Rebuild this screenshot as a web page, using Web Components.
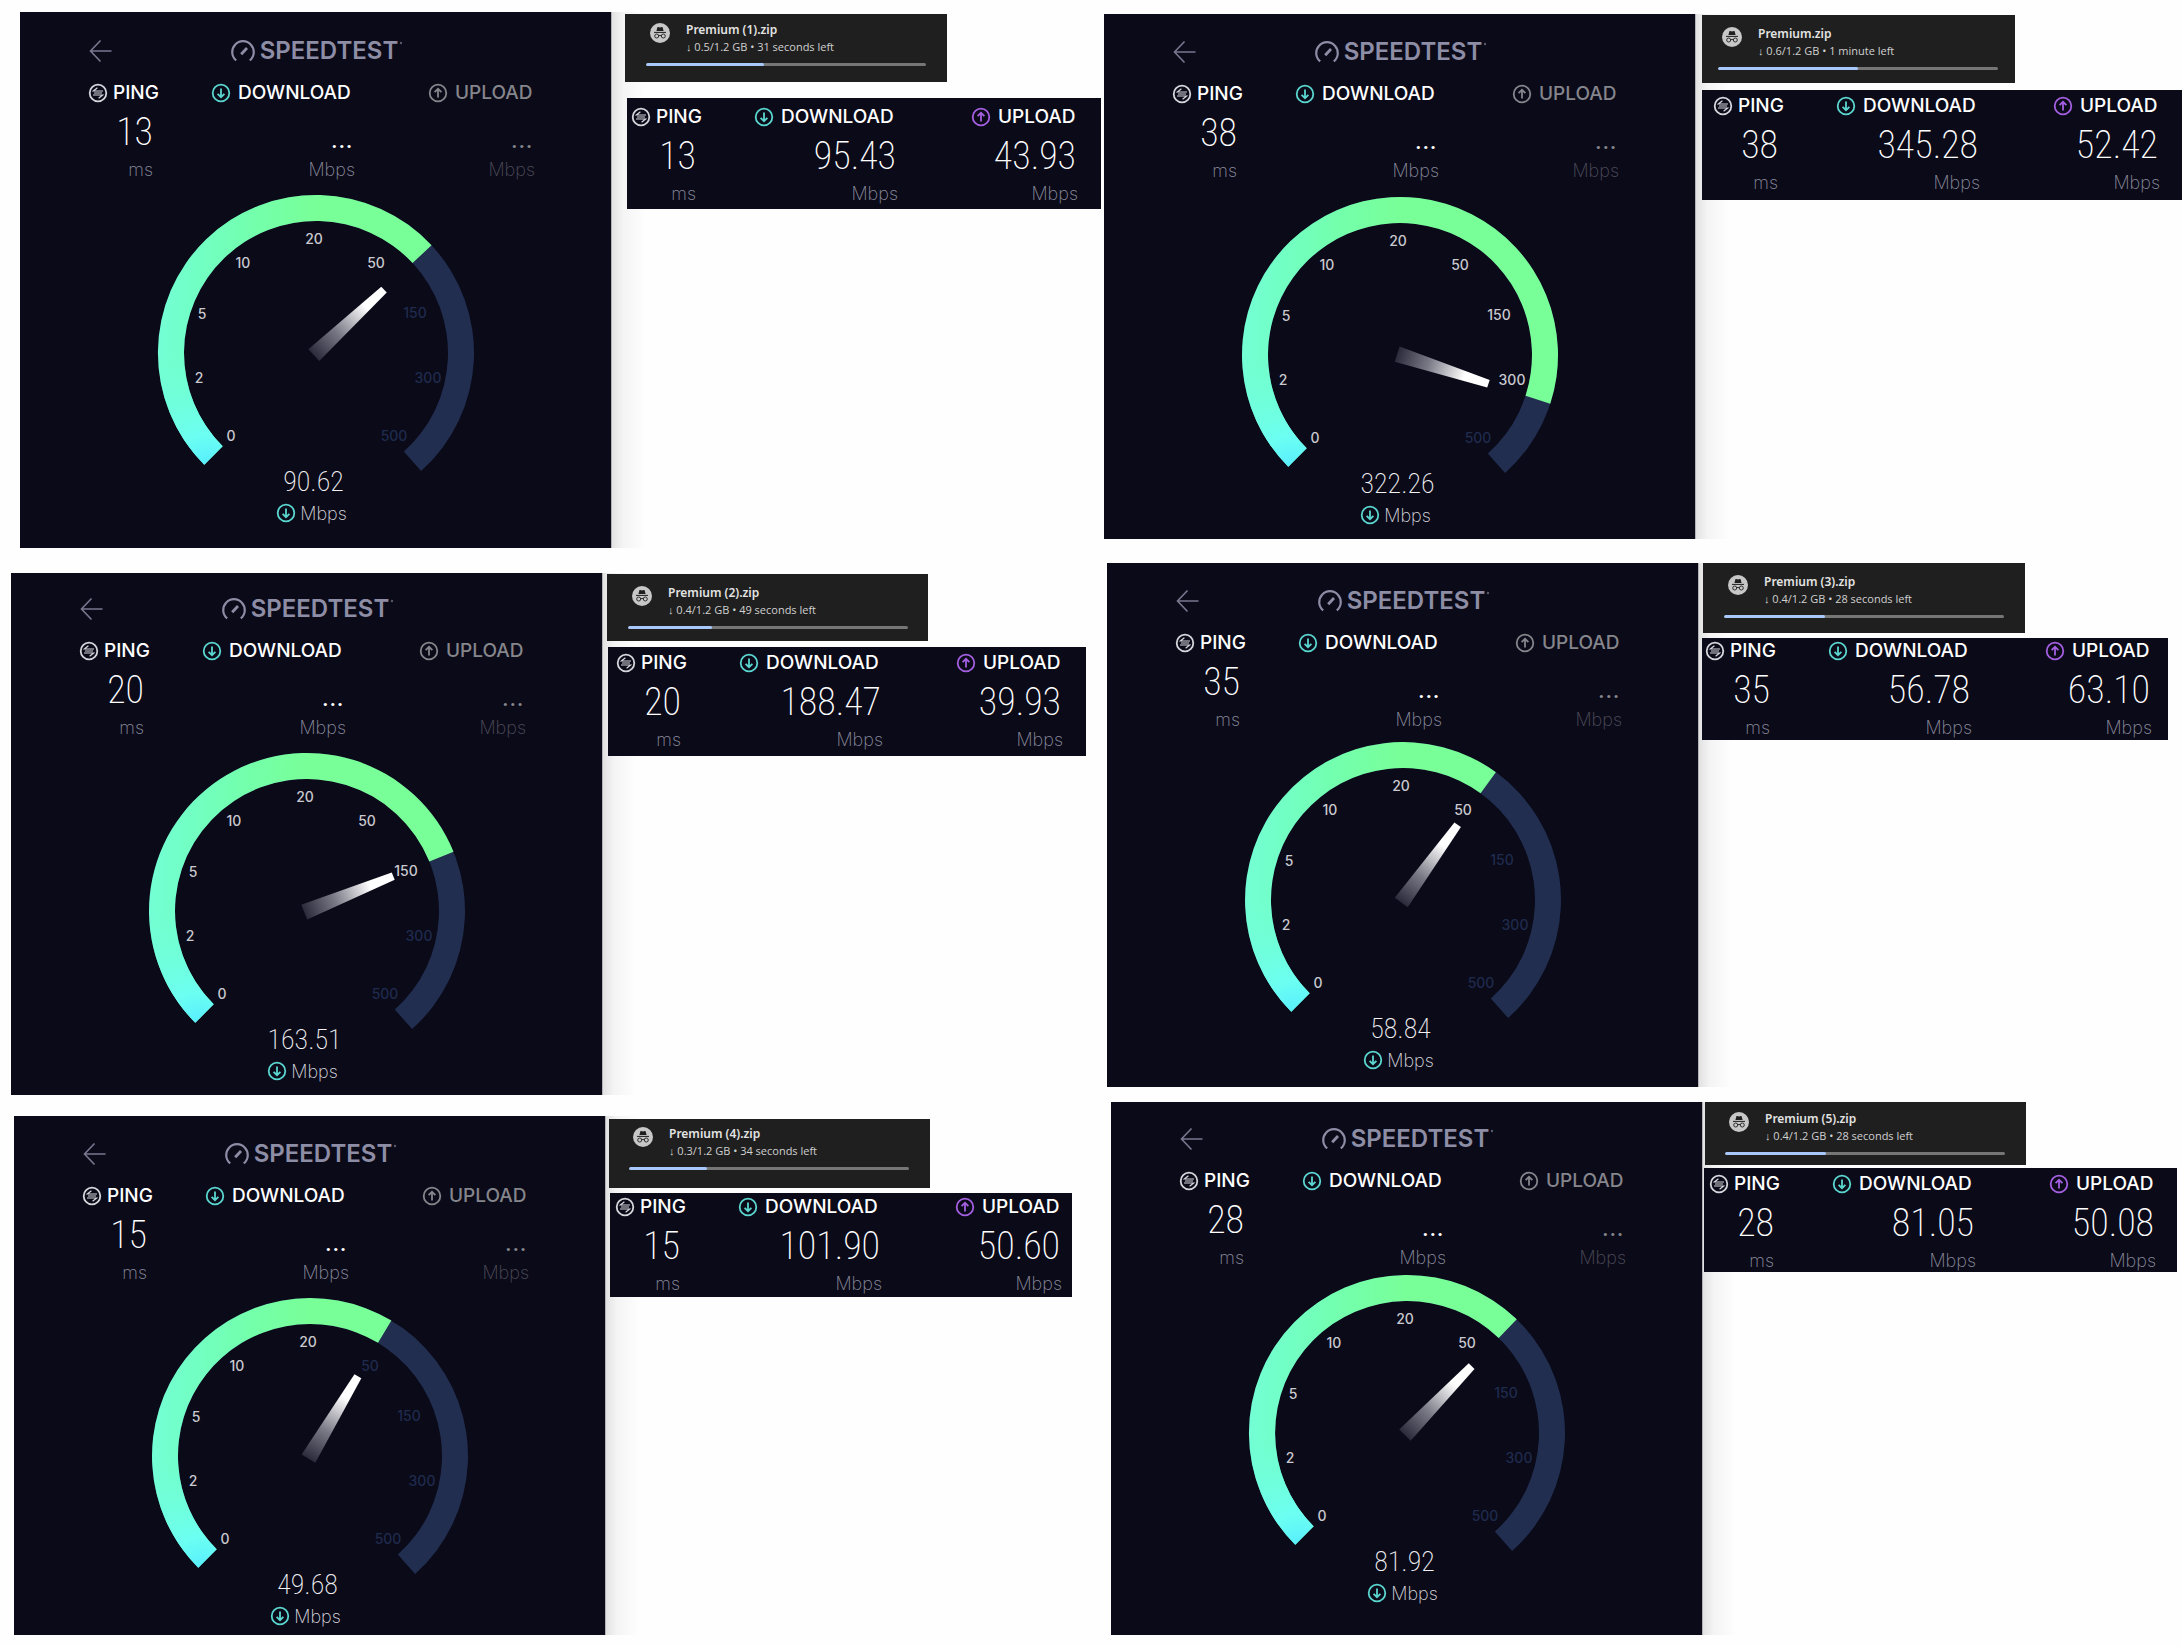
<!DOCTYPE html>
<html lang="en">
<head>
<meta charset="utf-8">
<title>Speedtest runs</title>
<style>
  body {
    margin: 0;
    background: #fefefe;
    font-family: Inter, "Liberation Sans", sans-serif;
  }
</style>
</head>
<body>

<run-board>
  <speed-run slot="left" style="--left:20px; --top:12px">
    <speed-panel slot="panel" ping="13" speed="90.62" angle="47" style="--pad-top:26px; --gauge-gap:14px; --pad-bottom:23px"></speed-panel>
    <download-toast slot="side" name="Premium (1).zip" status="0.5/1.2 GB • 31 seconds left" percent="42" style="--x:14px; --y:2px; --w:322px; --pad:7px 21px 16px"></download-toast>
    <result-strip slot="side" ping="13" download="95.43" upload="43.93" style="--x:16px; --y:16px; --w:474px; --pad:9px 4px 4px 5px"></result-strip>
  </speed-run>
  <speed-run slot="left" style="--left:11px; --top:25px">
    <speed-panel slot="panel" ping="20" speed="163.51" angle="68" style="--pad-top:23px; --gauge-gap:14px; --pad-bottom:12px"></speed-panel>
    <download-toast slot="side" name="Premium (2).zip" status="0.4/1.2 GB • 49 seconds left" percent="30" style="--x:5px; --y:1px; --w:321px; --pad:10px 21px 12px"></download-toast>
    <result-strip slot="side" ping="20" download="188.47" upload="39.93" style="--x:6px; --y:6px; --w:478px; --pad:6px 4px 5px 9px"></result-strip>
  </speed-run>
  <speed-run slot="left" style="--left:14px; --top:21px">
    <speed-panel slot="panel" ping="15" speed="49.68" angle="31" style="--pad-top:25px; --gauge-gap:14px; --pad-bottom:7px"></speed-panel>
    <download-toast slot="side" name="Premium (4).zip" status="0.3/1.2 GB • 34 seconds left" percent="28" style="--x:4px; --y:3px; --w:321px; --pad:6px 20px 18px"></download-toast>
    <result-strip slot="side" ping="15" download="101.90" upload="50.60" style="--x:5px; --y:5px; --w:462px; --pad:4px 4px 2px 6px"></result-strip>
  </speed-run>

  <speed-run slot="right" style="--left:1px; --top:14px">
    <speed-panel slot="panel" ping="38" speed="322.26" angle="108" style="--pad-top:25px; --gauge-gap:15px; --pad-bottom:12px"></speed-panel>
    <download-toast slot="side" name="Premium.zip" status="0.6/1.2 GB • 1 minute left" percent="50" style="--x:7px; --y:1px; --w:313px; --pad:10px 16px 13px"></download-toast>
    <result-strip slot="side" ping="38" download="345.28" upload="52.42" style="--x:7px; --y:7px; --w:480px; --pad:6px 4px 6px 12px"></result-strip>
  </speed-run>
  <speed-run slot="right" style="--left:4px; --top:24px">
    <speed-panel slot="panel" ping="35" speed="58.84" angle="36" style="--pad-top:25px; --gauge-gap:11px; --pad-bottom:15px"></speed-panel>
    <download-toast slot="side" name="Premium (3).zip" status="0.4/1.2 GB • 28 seconds left" percent="36" style="--x:5px; --y:0px; --w:322px; --pad:10px 21px 15px"></download-toast>
    <result-strip slot="side" ping="35" download="56.78" upload="63.10" style="--x:4px; --y:5px; --w:466px; --pad:3px 4px 1px 4px"></result-strip>
  </speed-run>
  <speed-run slot="right" style="--left:8px; --top:15px">
    <speed-panel slot="panel" ping="28" speed="81.92" angle="44" style="--pad-top:24px; --gauge-gap:6px; --pad-bottom:30px"></speed-panel>
    <download-toast slot="side" name="Premium (5).zip" status="0.4/1.2 GB • 28 seconds left" percent="36" style="--x:3px; --y:0px; --w:321px; --pad:8px 20px 10px"></download-toast>
    <result-strip slot="side" ping="28" download="81.05" upload="50.08" style="--x:2px; --y:3px; --w:473px; --pad:6px 4px 0 6px"></result-strip>
  </speed-run>
</run-board>

<script>
  class RunBoard extends HTMLElement {
    constructor() {
      super();
      this.attachShadow({ mode: 'open' });
      this.shadowRoot.innerHTML = `
        <style>
          :host { display: grid; grid-template-columns: 1103fr 1079fr; align-items: start; }
          div { display: flex; flex-direction: column; min-width: 0; }
        </style>
        <div><slot name="left"></slot></div>
        <div><slot name="right"></slot></div>
      `;
    }
  }

  // one test: the panel on the left, its toast and result strip beside it
  class SpeedRun extends HTMLElement {
    constructor() {
      super();
      this.attachShadow({ mode: 'open' });
      this.shadowRoot.innerHTML = `
        <style>
          :host { display: flex; margin: var(--top) 0 0 var(--left); }
          .panel { flex: 0 1 591px; min-width: 0; }
          .side {
            flex: 1;
            min-width: 0;
            display: flex;
            flex-direction: column;
            align-items: flex-start;
            background: linear-gradient(to right, #b4b4b8 0 1px, #e2e2e2 1px, #f4f4f4 12px, #fefefe 34px);
          }
        </style>
        <div class="panel"><slot name="panel"></slot></div>
        <div class="side"><slot name="side"></slot></div>
      `;
    }
  }

  const icons = {
    ping: `
      <circle cx="10" cy="10" r="8.3"/>
      <path d="M15 8H5.4L9.4 4.8M6 10H14M5 12H14.6L10.6 15.2" stroke-width="1.2"/>`,
    down: `
      <circle cx="10" cy="10" r="8.3"/>
      <path d="M10 5.4V14M6.6 10.8L10 14.2L13.4 10.8"/>`,
    up: `
      <circle cx="10" cy="10" r="8.3"/>
      <path d="M10 14.6V6M6.6 9.2L10 5.8L13.4 9.2"/>`
  };

  class RoundIcon extends HTMLElement {
    constructor() {
      super();
      this.attachShadow({ mode: 'open' });
    }

    connectedCallback() {
      this.shadowRoot.innerHTML = `
        <style>
          :host { display: block; flex: none; width: 20px; height: 20px; }
          svg { display: block; fill: none; stroke: currentColor; stroke-width: 1.8; }
        </style>
        <svg viewBox="0 0 20 20" width="20" height="20">${icons[this.getAttribute('name')]}</svg>
      `;
    }
  }

  class SpeedStats extends HTMLElement {
    constructor() {
      super();
      this.attachShadow({ mode: 'open' });
    }

    connectedCallback() {
      const ping = this.getAttribute('ping');
      const download = this.getAttribute('download') || '...';
      const upload = this.getAttribute('upload') || '...';
      const waiting = !this.hasAttribute('upload');
      this.shadowRoot.innerHTML = `
        <style>
          :host { display: grid; grid-template-columns: 123px 217px 107px; color: #fff; }
          dl { margin: 0; }
          dt { display: flex; align-items: center; gap: 5px; height: 20px; font-size: 19px; font-weight: 500; line-height: 20px; margin-left: -1px; }
          dd { margin: 0; text-align: right; }
          .ping { width: 64px; }
          .down { width: 143px; }
          .up { width: 106px; }
          .value { height: 56px; line-height: 58px; padding-right: 2px; font-family: "Roboto Condensed", Roboto, sans-serif; font-weight: 200; font-size: 38px; }
          .ping .value { padding-right: 0; }
          .dots { line-height: 72px; font-weight: 400; font-size: 28px; }
          .unit { height: 22px; line-height: 22px; font-size: 18px; font-weight: 200; color: #8a8a9c; }
          .ping round-icon { color: #d6d6dc; }
          .down round-icon { color: #5ad6cf; }
          .up round-icon { color: #a35fe0; }
          .down dt, .up dt { gap: 7px; }
          .off dt, .off .value, .up.off round-icon { color: #85858c; }
          .off .unit { color: #4b4b58; }
        </style>
        <dl class="ping">
          <dt><round-icon name="ping"></round-icon>PING</dt>
          <dd class="value">${ping}</dd>
          <dd class="unit">ms</dd>
        </dl>
        <dl class="down">
          <dt><round-icon name="down"></round-icon>DOWNLOAD</dt>
          <dd class="value ${waiting ? 'dots' : ''}">${download}</dd>
          <dd class="unit">Mbps</dd>
        </dl>
        <dl class="up ${waiting ? 'off' : ''}">
          <dt><round-icon name="up"></round-icon>UPLOAD</dt>
          <dd class="value ${waiting ? 'dots' : ''}">${upload}</dd>
          <dd class="unit">Mbps</dd>
        </dl>
      `;
    }
  }

  // scale labels: value, offset from the gauge centre, angle from which it lights up
  const ticks = [
    ['0', -85, 83, -135],
    ['2', -117, 25, -101],
    ['5', -114, -39, -68],
    ['10', -73, -90, -34],
    ['20', -2, -114, 0],
    ['50', 60, -90, 34],
    ['150', 99, -40, 67],
    ['300', 112, 25, 101],
    ['500', 78, 83, 138]
  ];

  class SpeedGauge extends HTMLElement {
    constructor() {
      super();
      this.attachShadow({ mode: 'open' });
    }

    point(angle, r) {
      const a = angle * Math.PI / 180;
      return `${(158 + r * Math.sin(a)).toFixed(2)} ${(158 - r * Math.cos(a)).toFixed(2)}`;
    }

    arc(from, to) {
      const large = to - from > 180 ? 1 : 0;
      return `M${this.point(from, 158)}A158 158 0 ${large} 1 ${this.point(to, 158)}`
        + `L${this.point(to, 132)}A132 132 0 ${large} 0 ${this.point(from, 132)}Z`;
    }

    connectedCallback() {
      const angle = Number(this.getAttribute('angle'));
      this.shadowRoot.innerHTML = `
        <style>
          :host { display: block; width: 316px; height: 271px; }
          svg { display: block; overflow: visible; }
          text { font-size: 14px; font-weight: 500; text-anchor: middle; fill: #1f2b4d; }
          .lit { fill: #c9c9cf; }
        </style>
        <svg viewBox="0 0 316 271" width="316" height="271">
          <defs>
            <linearGradient id="fill" gradientUnits="userSpaceOnUse" x1="0" y1="0" x2="158" y2="0">
              <stop offset="0" stop-color="#73ffd4"/>
              <stop offset=".35" stop-color="#72ffbe"/>
              <stop offset=".6" stop-color="#73ffac"/>
              <stop offset="1" stop-color="#79ff98"/>
            </linearGradient>
            <radialGradient id="tip" gradientUnits="userSpaceOnUse" cx="50" cy="274" r="120">
              <stop offset="0" stop-color="#55ecff"/>
              <stop offset=".3" stop-color="#6cfff2"/>
              <stop offset="1" stop-color="#70ffdc" stop-opacity="0"/>
            </radialGradient>
            <linearGradient id="needle" gradientUnits="userSpaceOnUse" x1="0" y1="4" x2="0" y2="-92">
              <stop offset="0" stop-color="#292839"/>
              <stop offset=".35" stop-color="#797986"/>
              <stop offset=".75" stop-color="#fff"/>
            </linearGradient>
          </defs>
          <path d="${this.arc(-135, 138.3)}" fill="#212e50"/>
          <path d="${this.arc(-135, angle)}" fill="url(#fill)"/>
          <path d="${this.arc(-135, Math.min(angle, 0))}" fill="url(#tip)"/>
          <path d="M-8 3H8L4 -93H-4Z" fill="url(#needle)" transform="translate(158 158) rotate(${angle})"/>
          ${ticks.map(([label, x, y, at]) =>
            `<text x="${158 + x}" y="${163 + y}" class="${at <= angle ? 'lit' : ''}">${label}</text>`).join('')}
        </svg>
      `;
    }
  }

  class SpeedPanel extends HTMLElement {
    constructor() {
      super();
      this.attachShadow({ mode: 'open' });
    }

    connectedCallback() {
      this.shadowRoot.innerHTML = `
        <style>
          :host {
            display: flex;
            flex-direction: column;
            align-items: center;
            padding: var(--pad-top) 0 var(--pad-bottom);
            background: #0b0a19;
            color: #fff;
          }
          header { box-sizing: border-box; width: 100%; display: grid; grid-template-columns: 1fr auto 1fr; align-items: center; height: 24px; padding: 0 67px 0 69px; }
          button { width: 24px; height: 24px; padding: 0; border: 0; background: none; color: #77788e; }
          button svg { display: block; }
          .logo { display: flex; align-items: center; gap: 4px; color: #8d8da6; font-size: 24px; font-weight: 600; line-height: 26px; }
          .logo svg { display: block; }
          .logo .mark { align-self: flex-start; margin-left: -3px; }
          speed-stats { margin: 21px 0 var(--gauge-gap); align-self: flex-start; margin-left: 69px; }
          .readout { display: flex; flex-direction: column; align-items: center; gap: 5px; margin-right: 8px; }
          .speed { height: 30px; line-height: 32px; padding-left: 4px; font-family: "Roboto Condensed", Roboto, sans-serif; font-weight: 200; font-size: 28px; color: #f2f2f4; }
          .unit { display: flex; align-items: center; gap: 4px; height: 24px; font-size: 18px; font-weight: 200; color: #d8d8de; }
          .unit round-icon { color: #5ad6cf; }
        </style>
        <header>
          <button type="button" aria-label="Back">
            <svg width="24" height="24" viewBox="0 0 24 24" fill="none" stroke="currentColor" stroke-width="1.6">
              <path d="M22.5 12H1.5M11.5 1.5L1.5 12L11.5 22.5"/>
            </svg>
          </button>
          <div class="logo">
            <svg width="26" height="24" viewBox="0 0 26 24" fill="none" stroke="currentColor" stroke-width="2.2">
              <path d="M6.2 21.4A10.8 10.8 0 1 1 19.8 21.4" />
              <path d="M11.2 15.2L17 9" stroke-width="2.8"/>
            </svg>
            <span>SPEEDTEST</span>
            <svg class="mark" width="4" height="8" viewBox="0 0 4 8"><circle cx="2" cy="5" r="1.2" fill="currentColor" opacity=".6"/></svg>
          </div>
        </header>
        <speed-stats ping="${this.getAttribute('ping')}"></speed-stats>
        <speed-gauge angle="${this.getAttribute('angle')}"></speed-gauge>
        <div class="readout">
          <div class="speed">${this.getAttribute('speed')}</div>
          <div class="unit"><round-icon name="down"></round-icon>Mbps</div>
        </div>
      `;
    }
  }

  class ResultStrip extends HTMLElement {
    constructor() {
      super();
      this.attachShadow({ mode: 'open' });
    }

    connectedCallback() {
      this.shadowRoot.innerHTML = `
        <style>
          :host {
            display: block;
            box-sizing: border-box;
            width: 100%;
            max-width: var(--w);
            margin: var(--y) 0 0 var(--x);
            padding: var(--pad);
            background: #0b0a19;
          }
        </style>
        <speed-stats ping="${this.getAttribute('ping')}" download="${this.getAttribute('download')}" upload="${this.getAttribute('upload')}"></speed-stats>
      `;
    }
  }

  class DownloadToast extends HTMLElement {
    constructor() {
      super();
      this.attachShadow({ mode: 'open' });
    }

    connectedCallback() {
      const name = this.getAttribute('name');
      this.shadowRoot.innerHTML = `
        <style>
          :host {
            display: block;
            box-sizing: border-box;
            width: 100%;
            max-width: var(--w);
            margin: var(--y) 0 0 var(--x);
            padding: var(--pad);
            background: #1f1f1f;
            color: #e3e3e3;
            font-family: "Noto Sans", "Open Sans", sans-serif;
          }
          .file { display: flex; gap: 16px; padding-left: 4px; }
          .file svg { display: block; margin-top: 2px; }
          label, p { display: block; margin: 0; height: 17px; line-height: 17px; white-space: nowrap; }
          label { font-size: 12px; font-weight: 600; }
          p { font-family: "Open Sans", "Noto Sans", sans-serif; font-size: 11px; color: #d0d0d0; }
          .arrow { font-family: "Liberation Sans", sans-serif; }
          progress { display: block; appearance: none; width: 280px; height: 3px; margin-top: 8px; border: 0; border-radius: 2px; overflow: hidden; }
          progress::-webkit-progress-bar { background: #767676; }
          progress::-webkit-progress-value { background: #a8c7fa; border-radius: 2px; }
        </style>
        <div class="file">
          <svg width="20" height="20" viewBox="0 0 20 20">
            <circle cx="10" cy="10" r="10" fill="#c7c7c7"/>
            <path d="M6.4 8L7.4 4.3Q7.6 3.8 8.2 4L10 4.5L11.8 4Q12.4 3.8 12.6 4.3L13.6 8Z" fill="#1f1f1f"/>
            <path d="M4 9.4H16" stroke="#1f1f1f" stroke-width="1"/>
            <g fill="none" stroke="#1f1f1f" stroke-width=".9">
              <circle cx="6.7" cy="13" r="2"/>
              <circle cx="13.3" cy="13" r="2"/>
              <path d="M8.7 12.8Q10 12 11.3 12.8"/>
            </g>
          </svg>
          <div>
            <label for="bar">${name}</label>
            <p><span class="arrow">↓</span> ${this.getAttribute('status')}</p>
          </div>
        </div>
        <progress id="bar" max="100" value="${this.getAttribute('percent')}"></progress>
      `;
    }
  }

  customElements.define('run-board', RunBoard);
  customElements.define('speed-run', SpeedRun);
  customElements.define('round-icon', RoundIcon);
  customElements.define('speed-stats', SpeedStats);
  customElements.define('speed-gauge', SpeedGauge);
  customElements.define('speed-panel', SpeedPanel);
  customElements.define('result-strip', ResultStrip);
  customElements.define('download-toast', DownloadToast);
</script>
</body>
</html>
